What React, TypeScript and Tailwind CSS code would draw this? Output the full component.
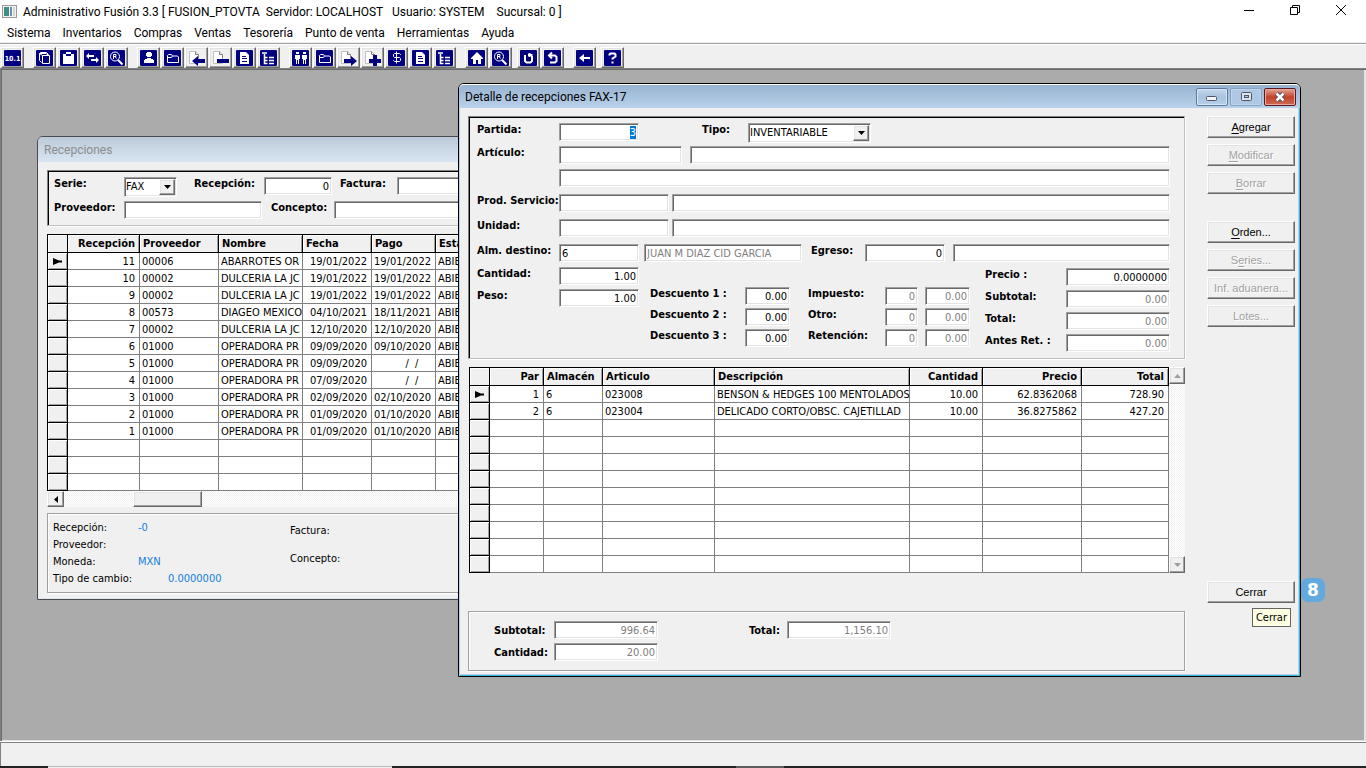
import type { InputHTMLAttributes, ReactNode } from "react";

const ui = 'font-["DejaVu_Sans_Condensed","Noto_Sans",sans-serif]';
const sunken =
  "border border-t-[#a0a0a0] border-l-[#a0a0a0] border-r-white border-b-white shadow-[inset_1px_1px_0_#696969,inset_-1px_-1px_0_#e3e3e3]";
const raised =
  "border border-t-white border-l-white border-r-[#696969] border-b-[#696969] shadow-[inset_-1px_-1px_0_#a0a0a0,inset_1px_1px_0_#e3e3e3]";
const panel =
  "border border-t-[#808080] border-l-[#808080] border-r-[#c0c0c0] border-b-[#c0c0c0] shadow-[inset_1px_1px_0_#000,1px_1px_0_#fff]";
const etched = "border border-[#a0a0a0] shadow-[inset_1px_1px_0_#fff,1px_1px_0_#fff]";
const track = "bg-[repeating-conic-gradient(#ffffff_0_25%,#f0f0f0_0_50%)] bg-[length:2px_2px]";

/* ---------- toolbar icons ---------- */

const glyphs: Record<string, ReactNode> = {
  version: (
    <text x="8.5" y="11" textAnchor="middle" fill="#fff" stroke="none" fontSize="7" fontWeight="bold" fontFamily="DejaVu Sans Condensed, sans-serif">
      10.1
    </text>
  ),
  cube: <path d="M3.500 3.500l1-1h6l2 2M3.500 3.500v7l2 2M3.500 3.500l3 2M6.500 5.500h7v8h-7zM4 3.500h6l3 2" />,
  clipboard: <path fill="#fff" stroke="none" d="M3 4h3V2h5v2h3v10H3zM6 4v2h5V4z" fillRule="evenodd" />,
  swap: (
    <g fill="#fff" stroke="none">
      <path d="M2 6l3-3v2h5v2H5v2z" />
      <path d="M15 10l-3-3v2H7v2h5v2z" />
    </g>
  ),
  search: (
    <>
      <circle cx="7" cy="6.5" r="4.5" />
      <path d="M10 10l4.500 4.500" strokeWidth="2" />
      <path d="M5.500 9V4.500h2.500v2H6M7 6.500l1.500 2" />
    </>
  ),
  person: <path fill="#fff" stroke="none" d="M7 2h4v1h1v3h-1v1H7V6H6V3h1zM7 8h4v1h2v1h1v3H4v-3h1V9h2z" />,
  folder: <path d="M3.500 12.500v-7l1-1h3l1 1.500h5l1 1v5.500zM8.500 6l-1 1.500H4" />,
  doc: (
    <>
      <path fill="#fff" stroke="none" d="M4 2h6l3 3v9H4z" />
      <path stroke="#000080" d="M6 6.500h4M6 8.500h5M6 11.500h5" />
    </>
  ),
  tree: <path d="M2 3h5M4.500 4v9.500h3M4.500 7.500h3M4.500 10.500h3M9 7.500h5M9 10.500h5M9 13.500h5" strokeWidth="1.500" />,
  people: (
    <g fill="#fff" stroke="none">
      <path d="M4 2h3v2H4zM3 5h5v4H7v5H6v-4H5v4H4V9H3z" />
      <path d="M11 2h3v2h-3zM10 5h5v4h-1v5h-1v-4h-1v4h-1V9h-1z" />
    </g>
  ),
  dollar: <path d="M12.500 5V4.500l-1-1h-5l-1 1v2l1 1h5l1 1v2l-1 1h-5l-1-1V10M8.500 1.500v12" />,
  home: <path fill="#fff" stroke="none" d="M9 2l6 6v1h-2v5h-3v-4H8v4H5V9H3V8z" />,
  refresh: <path d="M5 5v6l1.500 1.500h4L12 11V6M8 5h4.500M9.500 3v4" strokeWidth="2" />,
  undo: <path d="M5 5.500h6l1.500 1.500v4L11 12.500H6M8 2.500l-3 3 3 3" strokeWidth="2" />,
  back: <path fill="#fff" stroke="none" d="M3 8l5-4v3h6v2H8v3z" />,
  help: <path d="M5.500 5.500V4.500l1-1h4l1 1v2l-3 2v1M8.500 11.500v2" strokeWidth="2" />,
};

function PageGlyph({ kind }: { kind: string }) {
  return (
    <svg width="17" height="16" viewBox="0 0 17 16" aria-hidden="true">
      <path d="M1.500 1.500h6l3 3v9h-9z" fill="#fff" stroke="#c0c0c0" />
      <path d="M7.500 1.500v3h3v4" fill="none" stroke="#808080" />
      {kind === "pageLeft" && <path d="M4 11l6-5v3h7v4h-7v3z" fill="#000080" />}
      {kind === "pageRight" && <path d="M17 11l-6-5v3H4v4h7v3z" fill="#000080" />}
      {kind === "pageMinus" && <path d="M5 9h12v4H5z" fill="#000080" />}
      {kind === "pagePlus" && <path d="M9 5h4v4h4v4h-4v3H9v-3H5V9h4z" fill="#000080" />}
    </svg>
  );
}

function ToolIcon({ kind }: { kind: string }) {
  if (kind.startsWith("page")) return <PageGlyph kind={kind} />;
  return (
    <svg width="17" height="16" viewBox="0 0 17 16" fill="none" stroke="#fff" aria-hidden="true">
      <rect width="17" height="16" rx="1" fill="#000080" stroke="none" />
      {glyphs[kind]}
    </svg>
  );
}

type Tool = [icon: string, name: string];
const toolGroups: Tool[][] = [
  [["version", "Versión"]],
  [["cube", "Artículos"], ["clipboard", "Inventario"], ["swap", "Traspasos"], ["search", "Consultar artículo"]],
  [["person", "Proveedores"], ["folder", "Compras"], ["pageLeft", "Recepciones"], ["pageMinus", "Devoluciones"], ["doc", "Reporte de compras"], ["tree", "Árbol de compras"]],
  [["people", "Clientes"], ["folder", "Ventas"], ["pageRight", "Remisiones"], ["pagePlus", "Facturas"], ["dollar", "Cobranza"], ["doc", "Reporte de ventas"], ["tree", "Árbol de ventas"]],
  [["home", "Inicio"], ["search", "Consultar"]],
];
const toolTail: Tool[][] = [[["refresh", "Actualizar"], ["undo", "Deshacer"]], [["back", "Regresar"]]];

function ToolGroup({ tools }: { tools: Tool[] }) {
  return (
    <div className="flex gap-px">
      {tools.map(([icon, name]) => (
        <button key={name} type="button" aria-label={name} className={`flex h-[21px] w-[23px] items-center justify-center ${raised}`}>
          <ToolIcon kind={icon} />
        </button>
      ))}
    </div>
  );
}

/* ---------- form pieces ---------- */

function Label({ id, className = "", children }: { id: string; className?: string; children: ReactNode }) {
  return (
    <label htmlFor={id} className={`shrink-0 whitespace-nowrap font-bold leading-[14px] ${className}`}>
      {children}
    </label>
  );
}

function Field({ className = "", ...props }: InputHTMLAttributes<HTMLInputElement>) {
  return (
    <input
      type="text"
      className={`h-[18px] min-w-0 rounded-none bg-white px-[2px] leading-[14px] outline-none selection:bg-[#0078d7] selection:text-white disabled:text-[#808080] ${sunken} ${className}`}
      {...props}
    />
  );
}

function Select({ id, value, className }: { id: string; value: string; className: string }) {
  return (
    <div className={`flex h-5 bg-white p-px ${sunken} ${className}`}>
      <select id={id} defaultValue={value} className="min-w-0 flex-1 appearance-none bg-transparent leading-[14px] outline-none">
        <option>{value}</option>
      </select>
      <span className={`flex w-4 items-center justify-center bg-[#f0f0f0] ${raised}`}>
        <svg width="7" height="4" viewBox="0 0 7 4" aria-hidden="true">
          <path d="M0 0h7L3.500 4z" />
        </svg>
      </span>
    </div>
  );
}

function SideButton({ hot, rest, before = "", disabled = false }: { hot: string; rest: string; before?: string; disabled?: boolean }) {
  return (
    <button
      type="button"
      disabled={disabled}
      className={`h-[22px] w-full shrink-0 font-["Liberation_Sans",Arial,sans-serif] text-[11px] leading-[14px] text-black disabled:text-[#a0a0a0] disabled:[text-shadow:1px_1px_0_#fff] ${raised}`}
    >
      {before}
      <span className="underline underline-offset-2">{hot}</span>
      {rest}
    </button>
  );
}

/* ---------- data grid ---------- */

interface Column {
  title: string;
  width: number;
  right?: boolean;
  rightCells?: boolean;
}

function Grid({ columns, rows, count, label }: { columns: Column[]; rows: string[][]; count: number; label: string }) {
  const total = 21 + columns.reduce((sum, c) => sum + c.width, 0);
  const filled = Array.from({ length: count }, (_, i) => rows[i] ?? columns.map(() => ""));
  return (
    <table aria-label={label} className="table-fixed border-separate border-spacing-0 bg-white" style={{ width: total }}>
      <colgroup>
        <col style={{ width: 21 }} />
        {columns.map((c) => (
          <col key={c.title} style={{ width: c.width }} />
        ))}
      </colgroup>
      <thead>
        <tr className="h-[19px] bg-[#f0f0f0]">
          <th className="border border-black p-0 shadow-[inset_1px_1px_0_#fff]" />
          {columns.map((c) => (
            <th
              key={c.title}
              scope="col"
              className={`overflow-hidden whitespace-nowrap border-y border-r border-black p-0 leading-[14px] shadow-[inset_1px_1px_0_#fff,inset_-1px_0_0_#a0a0a0] ${c.right ? "pr-[4px] text-right" : "pl-[3px] text-left"}`}
            >
              {c.title}
            </th>
          ))}
        </tr>
      </thead>
      <tbody>
        {filled.map((row, r) => (
          <tr key={r} className="h-[17px]">
            <td className="border-x border-b border-l-black border-r-black border-b-black bg-[#f0f0f0] p-0 shadow-[inset_1px_1px_0_#fff,inset_-1px_-1px_0_#a0a0a0]">
              {r === 0 && (
                <svg width="10" height="7" viewBox="0 0 10 7" className="mx-auto" aria-hidden="true">
                  <path d="M0 0l6 2.500H9v2H6L0 7z" />
                </svg>
              )}
            </td>
            {row.map((cell, i) => (
              <td
                key={i}
                className={`border-r border-b border-[#808080] p-0 ${columns[i].right || columns[i].rightCells ? "pr-[4px] text-right" : "pl-[2px] text-left"}`}
              >
                <div className="h-[15px] overflow-hidden whitespace-pre leading-[15px]">{cell}</div>
              </td>
            ))}
          </tr>
        ))}
      </tbody>
    </table>
  );
}

const receiptColumns: Column[] = [
  { title: "Recepción", width: 72, right: true },
  { title: "Proveedor", width: 79 },
  { title: "Nombre", width: 84 },
  { title: "Fecha", width: 69, rightCells: true },
  { title: "Pago", width: 64, rightCells: true },
  { title: "Estado", width: 80 },
];

const noDate = "/  /    ";
const receiptRows: string[][] = [
  ["11", "00006", "ABARROTES OR", "19/01/2022", "19/01/2022"],
  ["10", "00002", "DULCERIA LA JC", "19/01/2022", "19/01/2022"],
  ["9", "00002", "DULCERIA LA JC", "19/01/2022", "19/01/2022"],
  ["8", "00573", "DIAGEO MEXICO", "04/10/2021", "18/11/2021"],
  ["7", "00002", "DULCERIA LA JC", "12/10/2020", "12/10/2020"],
  ["6", "01000", "OPERADORA PR", "09/09/2020", "09/10/2020"],
  ["5", "01000", "OPERADORA PR", "09/09/2020", noDate],
  ["4", "01000", "OPERADORA PR", "07/09/2020", noDate],
  ["3", "01000", "OPERADORA PR", "02/09/2020", "02/10/2020"],
  ["2", "01000", "OPERADORA PR", "01/09/2020", "01/10/2020"],
  ["1", "01000", "OPERADORA PR", "01/09/2020", "01/10/2020"],
].map((r) => [...r, "ABIERTA"]);

const detailColumns: Column[] = [
  { title: "Par", width: 54, right: true },
  { title: "Almacén", width: 59 },
  { title: "Articulo", width: 112 },
  { title: "Descripción", width: 195 },
  { title: "Cantidad", width: 73, right: true },
  { title: "Precio", width: 99, right: true },
  { title: "Total", width: 87, right: true },
];
const detailRows = [
  ["1", "6", "023008", "BENSON & HEDGES 100 MENTOLADOS", "10.00", "62.8362068", "728.90"],
  ["2", "6", "023004", "DELICADO CORTO/OBSC. CAJETILLAD", "10.00", "36.8275862", "427.20"],
];

/* ---------- windows ---------- */

function ReceiptsWindow() {
  return (
    <section
      aria-label="Recepciones"
      className="absolute top-[67px] left-[36px] w-[640px] rounded-t-[6px] border border-[#4a4a4a] bg-[#f0f0f0] pb-[6px] shadow-[inset_1px_1px_0_#e4edf7,inset_-1px_-1px_0_#dbe6f3]"
    >
      <h2 className='h-[25px] rounded-t-[5px] bg-linear-to-b from-[#bccad9] to-[#d9e5f2] pl-[6px] font-[Roboto,"Noto_Sans",sans-serif] text-[12px] leading-[27px] text-[#8c8c8c]'>
        Recepciones
      </h2>
      <div className="flex flex-col pt-2 pr-2 pl-[9px]">
        <div className={`flex flex-col gap-1 py-[6px] pl-[6px] ${panel}`}>
          <div className="flex items-start">
            <Label id="serie" className="w-[70px]">Serie:</Label>
            <Select id="serie" value="FAX" className="w-[53px]" />
            <Label id="recepcion" className="ml-[17px] w-[70px]">Recepción:</Label>
            <Field id="recepcion" defaultValue="0" className="w-[68px] text-right" />
            <Label id="factura" className="ml-2 w-[57px]">Factura:</Label>
            <Field id="factura" className="w-[120px]" />
          </div>
          <div className="flex items-start">
            <Label id="proveedor" className="w-[70px]">Proveedor:</Label>
            <Field id="proveedor" className="w-[138px]" />
            <Label id="concepto" className="ml-[9px] w-[63px]">Concepto:</Label>
            <Field id="concepto" className="w-[180px]" />
          </div>
        </div>
        <div className="mt-2">
          <Grid label="Recepciones" columns={receiptColumns} rows={receiptRows} count={14} />
          <div className={`flex h-4 ${track}`}>
            <button type="button" aria-label="Desplazar a la izquierda" className={`flex w-[17px] items-center justify-center bg-[#f0f0f0] ${raised}`}>
              <svg width="4" height="7" viewBox="0 0 4 7" aria-hidden="true">
                <path d="M4 0v7L0 3.500z" />
              </svg>
            </button>
            <div className={`ml-[69px] w-[69px] bg-[#f0f0f0] ${raised}`} />
          </div>
        </div>
        <div className={`mt-[6px] grid grid-cols-[237px_1fr] py-[5px] pl-[5px] ${etched}`}>
          <dl className="grid grid-cols-[85px_1fr] leading-[17px] [&_dd]:text-[#1180dc]">
            <dt>Recepción:</dt>
            <dd>-0</dd>
            <dt>Proveedor:</dt>
            <dd />
            <dt>Moneda:</dt>
            <dd>MXN</dd>
            <dt>Tipo de cambio:</dt>
            <dd className="pl-[30px]">0.0000000</dd>
          </dl>
          <dl className="flex flex-col gap-[14px] pt-[5px] leading-[14px]">
            <dt>Factura:</dt>
            <dt>Concepto:</dt>
          </dl>
        </div>
      </div>
    </section>
  );
}

function CaptionButtons() {
  const base = "flex h-[18px] w-8 items-center justify-center rounded-[2px] border";
  return (
    <div className="flex gap-[2px]">
      <button type="button" aria-label="Minimizar" className={`${base} border-[#5f7b9c] bg-linear-to-b from-[#c4d8ee] via-[#a9c3df] via-50% to-[#b6cfe9] shadow-[inset_0_0_0_1px_#d6e5f5]`}>
        <svg width="12" height="9" viewBox="0 0 12 9" aria-hidden="true">
          <rect x=".5" y="4.500" width="10" height="4" rx="1" fill="#f4f4f4" stroke="#4b5566" />
        </svg>
      </button>
      <button type="button" aria-label="Maximizar" className={`${base} border-[#86a3c4] bg-[#afc9e5] shadow-[inset_0_0_0_1px_#bfd5ed]`}>
        <svg width="11" height="9" viewBox="0 0 11 9" aria-hidden="true">
          <rect x=".5" y=".5" width="10" height="8" rx="1" fill="#dde3ea" stroke="#4b5566" />
          <rect x="3.500" y="3.500" width="4" height="2" fill="#afc9e5" stroke="#4b5566" />
        </svg>
      </button>
      <button type="button" aria-label="Cerrar ventana" className={`${base} border-[#5b1a1f] bg-linear-to-b from-[#e3a495] from-0% via-[#c2422b] via-50% to-[#cf6a50] shadow-[inset_0_0_0_1px_#e6a99c]`}>
        <svg width="12" height="10" viewBox="0 0 12 10" aria-hidden="true">
          <path d="M2.500 1.500l7 7M9.500 1.500l-7 7" stroke="#4b4b55" strokeWidth="4.500" />
          <path d="M2.500 1.500l7 7M9.500 1.500l-7 7" stroke="#fff" strokeWidth="2.500" />
        </svg>
      </button>
    </div>
  );
}

function DetailForm() {
  return (
    <form className={`flex flex-col pt-[6px] pr-[14px] pb-[6px] pl-2 ${panel}`}>
      <div className="flex flex-col gap-[5px]">
        <div className="flex h-[18px] items-start">
          <Label id="partida" className="w-[82px]">Partida:</Label>
          <Field id="partida" defaultValue="3" autoFocus onFocus={(e) => e.currentTarget.select()} className="w-20 text-right" />
          <Label id="tipo" className="ml-[63px] w-[46px]">Tipo:</Label>
          <Select id="tipo" value="INVENTARIABLE" className="w-[123px]" />
        </div>
        <div className="flex items-start">
          <Label id="articulo" className="w-[82px]">Artículo:</Label>
          <Field id="articulo" className="w-[123px]" />
          <Field aria-label="Nombre del artículo" className="ml-2 flex-1" />
        </div>
        <div className="flex pl-[82px]">
          <Field aria-label="Descripción adicional" className="flex-1" />
        </div>
      </div>
      <div className="mt-[7px] flex flex-col gap-[7px]">
        <div className="flex items-start">
          <Label id="prod" className="w-[82px]">Prod. Servicio:</Label>
          <Field id="prod" className="w-[110px]" />
          <Field aria-label="Nombre del servicio" className="ml-[3px] flex-1" />
        </div>
        <div className="flex items-start">
          <Label id="unidad" className="w-[82px]">Unidad:</Label>
          <Field id="unidad" className="w-[110px]" />
          <Field aria-label="Nombre de la unidad" className="ml-[3px] flex-1" />
        </div>
        <div className="flex items-start">
          <Label id="almacen" className="w-[82px]">Alm. destino:</Label>
          <Field id="almacen" defaultValue="6" className="w-20" />
          <Field aria-label="Nombre del almacén" disabled defaultValue="JUAN M DIAZ CID GARCIA" className="ml-[5px] w-[158px]" />
          <Label id="egreso" className="ml-[9px] w-[54px]">Egreso:</Label>
          <Field id="egreso" defaultValue="0" className="w-20 text-right" />
          <Field aria-label="Concepto de egreso" className="ml-2 flex-1" />
        </div>
      </div>
      <div className="mt-[5px] flex items-start">
        <div className="grid grid-cols-[82px_80px] gap-y-1">
          <Label id="cantidad">Cantidad:</Label>
          <Field id="cantidad" defaultValue="1.00" className="text-right" />
          <Label id="peso">Peso:</Label>
          <Field id="peso" defaultValue="1.00" className="text-right" />
        </div>
        <div className="mt-5 ml-[11px] grid grid-cols-[95px_45px] gap-y-[3px]">
          {["1", "2", "3"].map((n) => (
            <div key={n} className="contents">
              <Label id={`descuento${n}`}>{`Descuento ${n} :`}</Label>
              <Field id={`descuento${n}`} defaultValue="0.00" className="text-right" />
            </div>
          ))}
        </div>
        <div className="mt-5 ml-[18px] grid grid-cols-[77px_40px_45px] gap-y-[3px]">
          {["Impuesto", "Otro", "Retención"].map((name) => (
            <div key={name} className="contents">
              <Label id={name}>{`${name}:`}</Label>
              <Field id={name} disabled defaultValue="0" className="w-[33px] text-right" />
              <Field aria-label={`Importe ${name}`} disabled defaultValue="0.00" className="text-right" />
            </div>
          ))}
        </div>
        <div className="mt-px ml-[15px] grid flex-1 grid-cols-[81px_1fr] gap-y-1">
          <Label id="precio">Precio :</Label>
          <Field id="precio" defaultValue="0.0000000" className="text-right" />
          <Label id="subtotal">Subtotal:</Label>
          <Field id="subtotal" disabled defaultValue="0.00" className="text-right" />
          <Label id="total">Total:</Label>
          <Field id="total" disabled defaultValue="0.00" className="text-right" />
          <Label id="antes">Antes Ret. :</Label>
          <Field id="antes" disabled defaultValue="0.00" className="text-right" />
        </div>
      </div>
    </form>
  );
}

function DetailWindow() {
  return (
    <section
      aria-label="Detalle de recepciones FAX-17"
      className="absolute top-[14px] left-[457px] w-[843px] rounded-t-[6px] border border-black bg-[#f0f0f0] pb-[5px] shadow-[inset_1px_0_0_#b9d1ea,inset_-1px_-1px_0_#35b5d8,inset_-2px_-2px_0_#b9d1ea]"
    >
      <header className="flex h-6 items-center justify-between rounded-t-[5px] border-t border-white bg-linear-to-b from-[#99b4d1] to-[#b9d1ea] pr-1 pl-[6px]">
        <h2 className='font-[Roboto,"Noto_Sans",sans-serif] text-[12px] leading-4'>Detalle de recepciones FAX-17</h2>
        <CaptionButtons />
      </header>
      <div className="flex gap-[22px] pt-2 pr-[5px] pl-[9px]">
        <div className="flex min-w-0 flex-1 flex-col">
          <DetailForm />
          <div className="mt-2 ml-px flex">
            <Grid label="Partidas" columns={detailColumns} rows={detailRows} count={11} />
            <div className={`flex w-[17px] flex-col justify-between ${track}`}>
              <button type="button" aria-label="Subir" className={`flex h-[17px] items-center justify-center bg-[#f0f0f0] ${raised}`}>
                <svg width="7" height="4" viewBox="0 0 7 4" fill="#a0a0a0" aria-hidden="true">
                  <path d="M0 4h7L3.500 0z" />
                </svg>
              </button>
              <button type="button" aria-label="Bajar" className={`flex h-[17px] items-center justify-center bg-[#f0f0f0] ${raised}`}>
                <svg width="7" height="4" viewBox="0 0 7 4" fill="#a0a0a0" aria-hidden="true">
                  <path d="M0 0h7L3.500 4z" />
                </svg>
              </button>
            </div>
          </div>
          <div className={`mt-[38px] flex flex-col gap-1 py-[9px] pl-[25px] ${etched}`}>
            <div className="flex items-start">
              <Label id="sumaSubtotal" className="w-[60px] pt-[3px]">Subtotal:</Label>
              <Field id="sumaSubtotal" disabled defaultValue="996.64" className="w-[104px] text-right" />
              <Label id="sumaTotal" className="ml-[91px] w-[38px] pt-[3px]">Total:</Label>
              <Field id="sumaTotal" disabled defaultValue="1,156.10" className="w-[104px] text-right" />
            </div>
            <div className="flex items-start">
              <Label id="sumaCantidad" className="w-[60px] pt-[3px]">Cantidad:</Label>
              <Field id="sumaCantidad" disabled defaultValue="20.00" className="w-[104px] text-right" />
            </div>
          </div>
        </div>
        <div className="flex w-[88px] shrink-0 flex-col justify-between">
          <div className="flex flex-col gap-[27px]">
            <div className="flex flex-col gap-[6px]">
              <SideButton hot="A" rest="gregar" />
              <SideButton hot="M" rest="odificar" disabled />
              <SideButton hot="B" rest="orrar" disabled />
            </div>
            <div className="flex flex-col gap-[6px]">
              <SideButton hot="O" rest="rden..." />
              <SideButton before="S" hot="e" rest="ries..." disabled />
              <SideButton hot="" rest="Inf. aduanera..." disabled />
              <SideButton hot="" rest="Lotes..." disabled />
            </div>
          </div>
          <div className="relative mb-[68px]">
            <SideButton hot="" rest="Cerrar" />
            <span role="tooltip" className="absolute top-[27px] right-1 border border-[#646464] bg-[#ffffe1] px-[3px] leading-[17px]">
              Cerrar
            </span>
            <span className='absolute -top-[3px] left-[94px] flex size-6 items-center justify-center rounded-[7px] bg-[#62a9de] font-["DejaVu_Sans",sans-serif] text-[17px] leading-none font-bold text-white'>
              8
            </span>
          </div>
        </div>
      </div>
    </section>
  );
}

const menus = ["Sistema", "Inventarios", "Compras", "Ventas", "Tesorería", "Punto de venta", "Herramientas", "Ayuda"];

export default function App() {
  return (
    <div className={`flex h-screen flex-col overflow-hidden bg-[#f0f0f0] text-[11px] text-black ${ui}`}>
      <header className='bg-white font-[Roboto,"Noto_Sans",sans-serif] text-[12px]'>
        <div className="flex h-[23px] items-center justify-between">
          <div className="flex items-center gap-[6px] pl-[2px]">
            <svg width="15" height="13" viewBox="0 0 15 13" aria-hidden="true">
              <rect x=".5" y=".5" width="14" height="12" fill="#f2f2f2" stroke="#9a9a9a" />
              <path d="M2 2h5v9H2z" fill="#3f8f86" />
              <path d="M8 2h2v9H8z" fill="#6b8fb5" />
              <path d="M11 2h2v9h-2z" fill="#d5d5d5" />
            </svg>
            <h1 className="whitespace-pre leading-4">
              {"Administrativo Fusión 3.3 [ FUSION_PTOVTA  Servidor: LOCALHOST   Usuario: SYSTEM    Sucursal: 0 ]"}
            </h1>
          </div>
          <div className="flex self-start pr-[2px]">
            <button type="button" aria-label="Minimizar aplicación" className="flex h-5 w-[46px] items-center justify-center">
              <svg width="10" height="10" viewBox="0 0 10 10" stroke="#000" aria-hidden="true">
                <path d="M0 5.500h10" />
              </svg>
            </button>
            <button type="button" aria-label="Restaurar aplicación" className="flex h-5 w-[46px] items-center justify-center">
              <svg width="10" height="10" viewBox="0 0 10 10" fill="none" stroke="#000" aria-hidden="true">
                <path d="M.5 2.500h7v7h-7zM2.500 2.500v-2h7v7h-2" />
              </svg>
            </button>
            <button type="button" aria-label="Cerrar aplicación" className="flex h-5 w-[46px] items-center justify-center">
              <svg width="10" height="10" viewBox="0 0 10 10" stroke="#000" aria-hidden="true">
                <path d="M0 0l10 10M10 0L0 10" />
              </svg>
            </button>
          </div>
        </div>
        <nav className="flex h-[19px] items-center gap-3 pl-[7px]">
          {menus.map((m) => (
            <button key={m} type="button" className="leading-4">
              {m}
            </button>
          ))}
        </nav>
      </header>

      <div className="mt-px flex h-[25px] gap-[9px] border-t border-[#a0a0a0] pt-[3px] pl-px shadow-[inset_0_1px_0_#fff]">
        {toolGroups.map((group, i) => (
          <ToolGroup key={i} tools={group} />
        ))}
        <div className="-ml-1 flex gap-[9px]">
          {toolTail.map((group, i) => (
            <ToolGroup key={i} tools={group} />
          ))}
          <div className="-ml-1">
            <ToolGroup tools={[["help", "Ayuda"]]} />
          </div>
        </div>
      </div>

      <main className="relative min-h-0 flex-1 overflow-hidden border-t border-l border-t-[#808080] border-l-[#808080] bg-[#ababab] shadow-[inset_0_1px_0_#696969,inset_1px_0_0_#696969,inset_-2px_-1px_0_#e3e3e3]">
        <ReceiptsWindow />
        <DetailWindow />
      </main>

      <footer className="border-t border-white">
        <div className="h-6 border-t border-l border-[#808080]" />
        <div className="flex h-[2px] bg-[#232326]">
          <div className="ml-12 w-[344px] border-t border-[#b8b8b8] bg-[#f0f0f0]" />
          <div className="ml-[344px] w-12 bg-[#5c5c5f]" />
        </div>
      </footer>
    </div>
  );
}
